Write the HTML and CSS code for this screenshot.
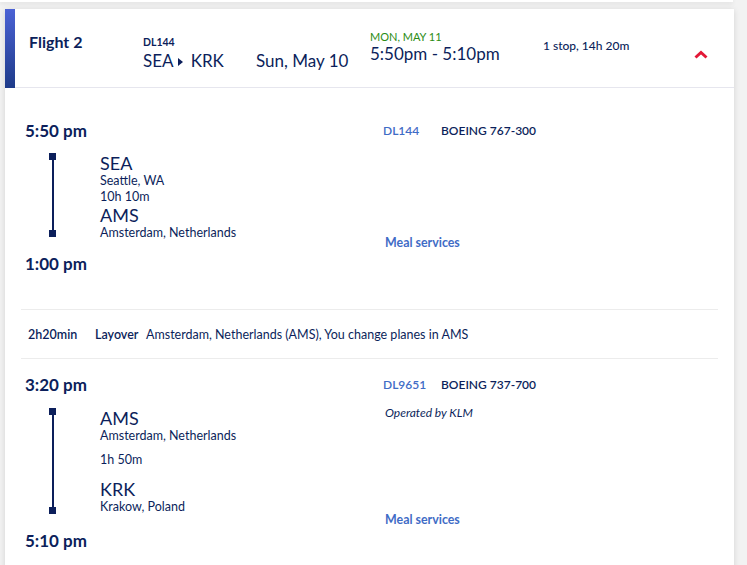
FILE: index.html
```html
<!DOCTYPE html>
<html lang="en">
<head>
    <meta charset="UTF-8">
    <meta name="viewport" content="width=device-width, initial-scale=1.0">
    <title>Flight details</title>
    <link rel="stylesheet" href="styles.css">
</head>
<body>
    <div class="prev-card"></div>

    <div class="flight-card">
        <div class="flight-header">
            <div class="accent"></div>
            <div class="col-title">Flight 2</div>
            <div class="col-route">
                <div class="flight-no">DL144</div>
                <div class="route">SEA
                    <svg class="arrow" width="5" height="8" viewBox="0 0 5 8"><path d="M0 0 L5 4 L0 8 Z" fill="#0c1f5b"/></svg>
                    KRK</div>
            </div>
            <div class="col-date">Sun, May 10</div>
            <div class="col-times">
                <div class="next-day">MON, MAY 11</div>
                <div class="times">5:50pm - 5:10pm</div>
            </div>
            <div class="col-stops">1 stop, 14h 20m</div>
            <div class="col-toggle">
                <svg width="14" height="9" viewBox="0 0 14 9"><polyline points="1.5,7.5 7,2.5 12.5,7.5" fill="none" stroke="#e31837" stroke-width="3"/></svg>
            </div>
        </div>

        <div class="segment seg-first">
            <div class="seg-left">
                <div class="seg-time">5:50 pm</div>
                <div class="seg-path">
                    <div class="timeline">
                        <span class="dot"></span>
                        <span class="line"></span>
                        <span class="dot"></span>
                    </div>
                    <div class="stations">
                        <div class="code">SEA</div>
                        <div class="city">Seattle, WA</div>
                        <div class="duration">10h 10m</div>
                        <div class="code">AMS</div>
                        <div class="city">Amsterdam, Netherlands</div>
                    </div>
                </div>
                <div class="seg-time arrive">1:00 pm</div>
            </div>
            <div class="seg-right">
                <div class="equip">
                    <span class="seg-flight">DL144</span>
                    <span class="aircraft">BOEING 767-300</span>
                </div>
                <div class="meal">Meal services</div>
            </div>
        </div>

        <div class="layover">
            <span class="lay-time">2h20min</span>
            <span class="lay-label">Layover</span>
            <span class="lay-text">Amsterdam, Netherlands (AMS), You change planes in AMS</span>
        </div>

        <div class="segment seg-second">
            <div class="seg-left">
                <div class="seg-time">3:20 pm</div>
                <div class="seg-path">
                    <div class="timeline">
                        <span class="dot"></span>
                        <span class="line"></span>
                        <span class="dot"></span>
                    </div>
                    <div class="stations">
                        <div class="code">AMS</div>
                        <div class="city">Amsterdam, Netherlands</div>
                        <div class="duration">1h 50m</div>
                        <div class="code">KRK</div>
                        <div class="city">Krakow, Poland</div>
                    </div>
                </div>
                <div class="seg-time arrive">5:10 pm</div>
            </div>
            <div class="seg-right">
                <div class="equip">
                    <span class="seg-flight">DL9651</span>
                    <span class="aircraft">BOEING 737-700</span>
                </div>
                <div class="operated">Operated by KLM</div>
                <div class="meal">Meal services</div>
            </div>
        </div>
    </div>
</body>
</html>
```

FILE: styles.css
```css
body {
    font-family: Lato, "Open Sans", sans-serif;
    margin: 0;
    background: #f2f2f2;
    color: #0c1f5b;
    overflow: hidden;
}

.prev-card {
    width: 733px;
    height: 2px;
    background: #fff;
    box-shadow: 0 1px 5px rgba(0, 0, 0, 0.14);
}

.flight-card {
    width: 729px;
    margin: 7px 0 0 5px;
    background: #fff;
    box-shadow: 0 1px 6px rgba(0, 0, 0, 0.13);
    padding-bottom: 20px;
}

/* collapsed summary row */
.flight-header {
    display: flex;
    align-items: flex-start;
    height: 78px;
    border-bottom: 1px solid #e6e6ee;
}

.accent {
    width: 10px;
    height: 79px;
    flex-shrink: 0;
    background: linear-gradient(#4b62d5, #1e3b89);
}

.col-title {
    width: 114px;
    margin: 24px 0 0 14px;
    font-size: 16px;
    line-height: 18px;
    font-weight: 700;
}

.col-route {
    width: 113px;
    margin-top: 26px;
}

.flight-no {
    font-size: 10.5px;
    line-height: 14px;
    font-weight: 700;
}

.route {
    font-size: 17px;
    line-height: 22px;
    margin-top: 1px;
    white-space: nowrap;
}

.arrow {
    margin: 0 3px 1px 1px;
}

.col-date {
    width: 114px;
    margin-top: 41px;
    font-size: 17px;
    line-height: 22px;
}

.col-times {
    width: 173px;
    margin-top: 21px;
}

.next-day {
    color: #2a8c13;
    font-size: 11px;
    line-height: 13px;
}

.times {
    font-size: 17px;
    line-height: 20px;
    margin-top: 1px;
}

.col-stops {
    flex: 1;
    margin-top: 29px;
    font-size: 12px;
    line-height: 15px;
    font-weight: 500;
}

.col-toggle {
    width: 14px;
    margin: 41px 26px 0 0;
    line-height: 0;
}

/* flight segments */
.segment {
    display: flex;
    padding-left: 20px;
}

.seg-first {
    padding-top: 33px;
    padding-bottom: 35px;
}

.seg-second {
    padding-top: 16px;
}

.seg-left {
    width: 358px;
}

.seg-time {
    font-size: 17px;
    line-height: 20px;
    font-weight: 700;
}

.seg-path {
    display: flex;
    margin-top: 12px;
}

.seg-second .seg-path {
    margin-top: 13px;
}

.timeline {
    width: 75px;
    display: flex;
    flex-direction: column;
    padding: 0 0 4px 24px;
    box-sizing: border-box;
}

.seg-second .timeline {
    padding-bottom: 1px;
}

.dot {
    width: 7px;
    height: 7px;
    background: #0c1f5b;
}

.line {
    flex: 1;
    width: 2px;
    margin-left: 2.5px;
    background: #0c1f5b;
}

.code {
    font-size: 18px;
    line-height: 20px;
}

.city,
.duration {
    font-size: 12.5px;
    line-height: 16px;
}

.seg-second .duration {
    margin: 8px 0 11px;
}

.arrive {
    margin-top: 13px;
}

.seg-second .arrive {
    margin-top: 16px;
}

.seg-right {
    flex: 1;
    display: flex;
    flex-direction: column;
    padding-top: 2px;
}

.equip {
    display: flex;
    font-size: 12px;
    line-height: 15px;
    font-weight: 600;
}

.seg-flight {
    width: 58px;
    color: #3f6cc6;
}

.aircraft {
    color: #0c1f5b;
}

.operated {
    margin: 13px 0 0 2px;
    font-size: 12px;
    line-height: 15px;
    font-style: italic;
}

.meal {
    margin: auto 0 23px 2px;
    font-size: 12.4px;
    line-height: 16px;
    font-weight: 700;
    color: #3f6cc6;
}

.layover {
    display: flex;
    align-items: center;
    height: 48px;
    margin: 0 16px;
    padding-left: 7px;
    border-top: 1px solid #ececec;
    border-bottom: 1px solid #ececec;
    font-size: 12.5px;
}

.lay-time {
    width: 67px;
    font-weight: 600;
}

.lay-label {
    width: 51px;
    font-weight: 600;
}
```
